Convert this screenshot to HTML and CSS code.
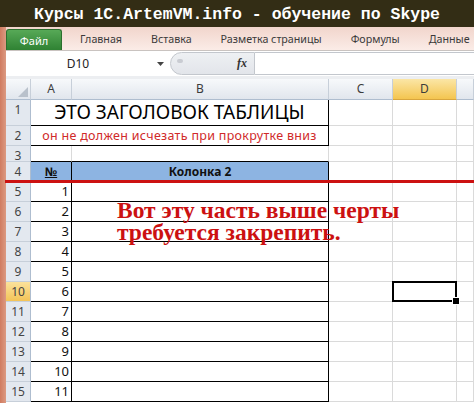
FILE: index.html
```html
<!DOCTYPE html>
<html lang="ru">
<head>
<meta charset="utf-8">
<title>Excel</title>
<link rel="stylesheet" href="styles.css">
</head>
<body>
<div class="title">Курсы 1C.ArtemVM.info - обучение по Skype</div>
<div class="app">
  <div class="edge"></div>
  <div class="main">
    <div class="tabs">
      <div class="tab file">Файл</div>
      <div class="tab first">Главная</div>
      <div class="tab">Вставка</div>
      <div class="tab">Разметка страницы</div>
      <div class="tab">Формулы</div>
      <div class="tab">Данные</div>
    </div>
    <div class="fbar">
      <div class="namebox">D10</div>
      <div class="dd"><svg width="7" height="4" viewBox="0 0 7 4"><path d="M0 0H7L3.5 4Z" fill="#444"/></svg></div>
      <div class="fxbox"><span class="grip"></span><span class="fx">fx</span></div>
      <div class="finput"></div>
    </div>
    <div class="sheet">
      <div class="ch corner"><svg width="10" height="10" viewBox="0 0 10 10"><path d="M10 0V10H0Z" fill="#b9c1cb"/></svg></div>
      <div class="ch">A</div>
      <div class="ch">B</div>
      <div class="ch">C</div>
      <div class="ch chsel">D</div>
      <div class="ch"></div>

      <div class="rh">1</div>
      <div class="c ab t big">ЭТО ЗАГОЛОВОК ТАБЛИЦЫ</div>
      <div class="c"></div><div class="c"></div><div class="c"></div>

      <div class="rh">2</div>
      <div class="c ab t sub">он не должен исчезать при прокрутке вниз</div>
      <div class="c"></div><div class="c"></div><div class="c"></div>

      <div class="rh">3</div>
      <div class="c bb"></div><div class="c bb"></div>
      <div class="c"></div><div class="c"></div><div class="c"></div>

      <div class="rh">4</div>
      <div class="c t hd"><u>№</u></div><div class="c t hd">Колонка 2</div>
      <div class="c"></div><div class="c"></div><div class="c"></div>

      <div class="rh">5</div>
      <div class="c t num">1</div><div class="c t"></div>
      <div class="c"></div><div class="c"></div><div class="c"></div>

      <div class="rh">6</div>
      <div class="c t num">2</div><div class="c t"></div>
      <div class="c"></div><div class="c"></div><div class="c"></div>

      <div class="rh">7</div>
      <div class="c t num">3</div><div class="c t"></div>
      <div class="c"></div><div class="c"></div><div class="c"></div>

      <div class="rh">8</div>
      <div class="c t num">4</div><div class="c t"></div>
      <div class="c"></div><div class="c"></div><div class="c"></div>

      <div class="rh">9</div>
      <div class="c t num">5</div><div class="c t"></div>
      <div class="c"></div><div class="c"></div><div class="c"></div>

      <div class="rh rhsel">10</div>
      <div class="c t num">6</div><div class="c t"></div>
      <div class="c"></div><div class="c sel"></div><div class="c"></div>

      <div class="rh">11</div>
      <div class="c t num">7</div><div class="c t"></div>
      <div class="c"></div><div class="c"></div><div class="c"></div>

      <div class="rh">12</div>
      <div class="c t num">8</div><div class="c t"></div>
      <div class="c"></div><div class="c"></div><div class="c"></div>

      <div class="rh">13</div>
      <div class="c t num">9</div><div class="c t"></div>
      <div class="c"></div><div class="c"></div><div class="c"></div>

      <div class="rh">14</div>
      <div class="c t num">10</div><div class="c t"></div>
      <div class="c"></div><div class="c"></div><div class="c"></div>

      <div class="rh">15</div>
      <div class="c t num">11</div><div class="c t"></div>
      <div class="c"></div><div class="c"></div><div class="c"></div>

      <div class="redline"></div>
      <div class="note">Вот эту часть выше черты<br>требуется закрепить.</div>
    </div>
  </div>
</div>
</body>
</html>
```

FILE: styles.css
```css
* { box-sizing: border-box; margin: 0; padding: 0; }
body {
  width: 474px;
  height: 403px;
  overflow: hidden;
  background: #fff;
  font-family: "Noto Sans", "DejaVu Sans", sans-serif;
}
.title {
  height: 27px;
  background: #332d15;
  color: #fff;
  font: bold 16.5px/30px "Liberation Mono", monospace;
  text-align: center;
  white-space: nowrap;
  overflow: hidden;
}
.app { display: flex; height: 376px; }
.edge { width: 6px; flex: none; background: linear-gradient(90deg, #d07b60, #dc9a82); }
.main { flex: 1; min-width: 0; display: flex; flex-direction: column; }

.tabs {
  height: 24px;
  display: flex;
  align-items: flex-end;
  background: linear-gradient(#f1d5cc, #fbece7);
  border-bottom: 1px solid #c9c3c0;
  font-size: 10.7px;
  color: #3a3a3a;
  white-space: nowrap;
}
.tab { line-height: 21px; margin-left: 29px; }
.tab.first { margin-left: 18px; }
.tab.file {
  margin-left: 0;
  width: 56px;
  height: 21px;
  text-align: center;
  color: #fff;
  font-size: 11px;
  border-radius: 3px 3px 0 0;
  background: linear-gradient(#57a957, #2f8233);
  border: 1px solid #2b6f2e;
  border-bottom: none;
}

.fbar {
  height: 28px;
  display: flex;
  background: #fff;
  border-bottom: 3px solid #eceef1;
  padding-top: 1px;
}
.namebox {
  width: 144px;
  text-align: center;
  font-size: 12px;
  line-height: 23px;
  color: #222;
}
.dd { width: 20px; display: flex; align-items: center; justify-content: center; }
.fxbox {
  width: 85px;
  height: 23px;
  background: linear-gradient(#eef0f3, #e2e5ea);
  border: 1px solid #c3c7cd;
  border-radius: 12px 0 0 12px;
  display: flex;
  align-items: center;
  justify-content: space-between;
  padding: 0 7px 0 6px;
}
.grip { width: 6px; height: 4px; border-radius: 3px; background: #c9ccd2; margin-top: -6px; }
.fx { font: italic bold 12px "Liberation Serif", serif; color: #333; }
.finput { flex: 1; height: 23px; border-top: 1px solid #c3c7cd; border-bottom: 1px solid #c3c7cd; }

.sheet {
  position: relative;
  display: grid;
  grid-template-columns: 25px 41px 257px 64px 64px 17px;
  grid-template-rows: 21px 26px 20px 16px repeat(12, 20px);
}
.ch {
  background: linear-gradient(#f7f9fb, #e1e6ed);
  border-right: 1px solid #c7cfd9;
  border-bottom: 1px solid #aebdcf;
  font-size: 12px;
  color: #3b3b3b;
  text-align: center;
  line-height: 20px;
}
.corner { display: flex; align-items: flex-end; justify-content: flex-end; padding: 0 2px 2px 0; }
.chsel { background: linear-gradient(#fbe6a6, #f4c550); border-bottom-color: #d9a63d; }
.rh {
  background: #e3e8ef;
  border-right: 1px solid #aebdcf;
  border-bottom: 1px solid #c7cfd9;
  font-size: 12px;
  color: #444;
  text-align: center;
  line-height: 19px;
}
.rhsel { background: linear-gradient(#fbe19b, #f3c458); }
.c {
  border-right: 1px solid #dadada;
  border-bottom: 1px solid #dadada;
  font-size: 13px;
  color: #111;
  line-height: 19px;
}
.t { border-right-color: #000; border-bottom-color: #000; }
.bb { border-bottom-color: #000; }
.ab { grid-column: span 2; text-align: center; white-space: nowrap; }
.big { font-size: 19px; line-height: 25px; color: #000; }
.sub { font-size: 12.5px; color: #d02a2a; letter-spacing: 0.3px; }
.hd { background: #8db4e2; font-weight: bold; font-size: 12px; text-align: center; }
.num { text-align: right; padding-right: 2px; }
.sel { position: relative; }
.sel::after {
  content: "";
  position: absolute;
  left: -1px; top: -1px; right: -1px; bottom: -1px;
  border: 2px solid #000;
  z-index: 2;
}
.sel::before {
  content: "";
  position: absolute;
  right: -4px; bottom: -4px;
  width: 6px; height: 6px;
  background: #000;
  border: 1px solid #fff;
  z-index: 3;
}
.redline {
  position: absolute;
  left: -1px; right: 0; top: 101px;
  height: 3px;
  background: #cc1111;
}
.note {
  position: absolute;
  left: 111px; top: 120px;
  font: bold 23.5px/22px "Liberation Serif", serif;
  color: #cc1111;
  white-space: nowrap;
}
```
